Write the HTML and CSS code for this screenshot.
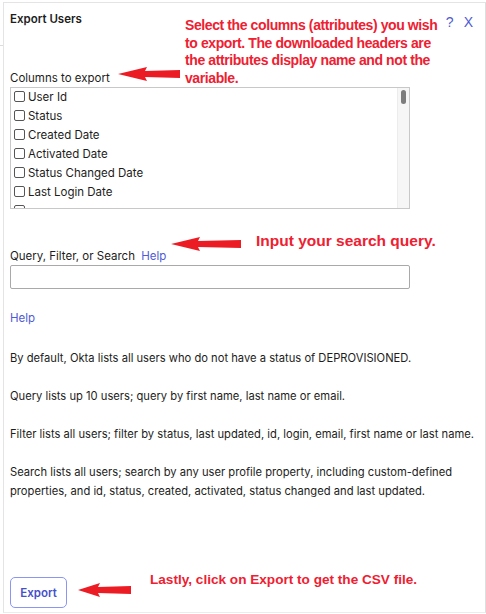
FILE: index.html
```html
<!DOCTYPE html>
<html>
<head>
    <meta charset="utf-8">
    <link rel="stylesheet" href="styles.css">
</head>
<body>
<div class="page">
    <div class="edge"></div>
    <div class="panel">
        <div class="header">
            <span class="title">Export Users</span>
            <span class="tools"><a class="toollink">?</a><a class="toollink">X</a></span>
        </div>

        <div class="label cols-label">Columns to export</div>
        <div class="listbox">
            <div class="items">
                <label class="item"><span class="box"></span>User Id</label>
                <label class="item"><span class="box"></span>Status</label>
                <label class="item"><span class="box"></span>Created Date</label>
                <label class="item"><span class="box"></span>Activated Date</label>
                <label class="item"><span class="box"></span>Status Changed Date</label>
                <label class="item"><span class="box"></span>Last Login Date</label>
                <label class="item"><span class="box"></span></label>
            </div>
            <div class="scrollbar"><div class="thumb"></div></div>
        </div>

        <div class="label query-label">Query, Filter, or Search <a class="link">Help</a></div>
        <div class="textbox"></div>

        <a class="link help">Help</a>

        <p class="note">By default, Okta lists all users who do not have a status of DEPROVISIONED.</p>
        <p class="note">Query lists up 10 users; query by first name, last name or email.</p>
        <p class="note">Filter lists all users; filter by status, last updated, id, login, email, first name or last name.</p>
        <p class="note">Search lists all users; search by any user profile property, including custom-defined properties, and id, status, created, activated, status changed and last updated.</p>

        <div class="footer">
            <button class="exportbtn">Export</button>
        </div>

        <!-- annotations drawn over the dialog -->
        <div class="callout callout-top">Select the columns (attributes) you wish to export. The downloaded headers are the attributes display name and not the variable.</div>
        <div class="callout callout-mid">Input your search query.</div>
        <div class="callout callout-bottom">Lastly, click on Export to get the CSV file.</div>

        <svg class="arrow arrow-top" width="62" height="16" viewBox="0 0 62 16"><polygon points="0,8 29,1 27,5 62,4 62,12 27,11 29,15" fill="#ec1c24"/></svg>
        <svg class="arrow arrow-mid" width="70" height="16" viewBox="0 0 70 16"><polygon points="0,8 29,1 27,5 70,4 70,12 27,11 29,15" fill="#ec1c24"/></svg>
        <svg class="arrow arrow-bottom" width="53" height="16" viewBox="0 0 53 16"><polygon points="0,8 22,1 20,5 53,4 53,12 20,11 22,15" fill="#ec1c24"/></svg>
    </div>
    <div class="side">
        <span class="mark dark"></span>
        <span class="mark blue"></span>
    </div>
</div>
</body>
</html>
```
FILE: styles.css
```css
html, body {
    margin: 0;
    padding: 0;
    background-color: #ffffff;
}

body {
    font-family: Inter, "Noto Sans", sans-serif;
    color: #1d1d21;
    overflow: hidden;
}

.page {
    display: flex;
    width: 486px;
    height: 614px;
}

.edge {
    width: 3px;
    border-bottom: 1px solid #dcdcdc;
    height: 45px;
}

.panel {
    position: relative;
    margin-top: 2px;
    width: 471px;
    height: 609px;
    padding: 0 6px;
    border-left: 1px solid #e4e4e4;
    border-top: 1px solid #e4e4e4;
    border-right: 1px solid #dedede;
    border-bottom: 1px solid #ececec;
}

.side {
    flex: 1;
    position: relative;
}
.mark {
    position: absolute;
    left: 1px;
    width: 3px;
}
.mark.dark {
    top: 98px;
    height: 6px;
    background-color: #444;
}
.mark.blue {
    top: 142px;
    height: 10px;
    background-color: #8f96e8;
}

.header {
    display: flex;
    justify-content: space-between;
    padding-top: 9px;
    height: 20px;
}

.title {
    font-size: 11.5px;
    font-weight: 600;
    color: #1d1d21;
}

.tools {
    display: flex;
    gap: 10px;
    margin-right: 6px;
    margin-top: 2px;
}

.toollink {
    color: #4f5bd5;
    font-family: "Liberation Sans", sans-serif;
    font-size: 14px;
}

.label {
    font-size: 11.5px;
    color: #1d1d21;
}

.cols-label {
    margin-top: 39px;
    height: 16px;
}

.listbox {
    display: flex;
    width: 398px;
    height: 120px;
    border: 1px solid #c8c8c8;
    overflow: hidden;
}

.items {
    flex: 1;
    padding: 0 3px;
    margin-top: -1px;
}

.item {
    display: flex;
    align-items: center;
    height: 19px;
    font-size: 11.5px;
    color: #1d1d21;
}

.box {
    width: 9px;
    height: 9px;
    border: 1px solid #555;
    border-radius: 2px;
    margin-right: 3px;
}

.scrollbar {
    width: 11px;
    background-color: #f6f6f6;
    border-left: 1px solid #ececec;
    padding-top: 2px;
}

.thumb {
    width: 5px;
    height: 14px;
    margin-left: 3px;
    border-radius: 3px;
    background-color: #7d7d7d;
}

.query-label {
    margin-top: 40px;
    height: 16px;
}

.link {
    color: #4f5bd5;
    margin-left: 3px;
}

.textbox {
    width: 398px;
    height: 22px;
    border: 1px solid #a9a9a9;
    border-radius: 2px;
}

.help {
    display: block;
    margin: 22px 0 0 0;
    font-size: 11.5px;
}

.note {
    margin: 19px 0 0 0;
    font-size: 11.2px;
    line-height: 19px;
    color: #1d1d21;
}
.help + .note {
    margin-top: 24px;
}

.footer {
    margin-top: 76px;
}

.exportbtn {
    width: 57px;
    height: 31px;
    background-color: #fff;
    border: 1px solid #8a96f2;
    border-radius: 5px;
    color: #4651c9;
    font-family: Inter, sans-serif;
    font-weight: 600;
    font-size: 11.5px;
    padding: 0;
}

/* red annotations */

.callout {
    position: absolute;
    color: #ee2031;
    font-family: "Liberation Sans", sans-serif;
    font-weight: bold;
    font-size: 14px;
    letter-spacing: -0.4px;
    line-height: 17.5px;
}

.callout-top {
    left: 181px;
    top: 14px;
    width: 256px;
}

.callout-mid {
    left: 252px;
    top: 229px;
    font-size: 15.5px;
    letter-spacing: 0;
}

.callout-bottom {
    left: 146px;
    top: 568px;
    font-size: 13.6px;
    letter-spacing: 0;
}

.arrow {
    position: absolute;
}
.arrow-top {
    left: 114px;
    top: 63px;
}
.arrow-mid {
    left: 167px;
    top: 233px;
}
.arrow-bottom {
    left: 74px;
    top: 579px;
}
```
